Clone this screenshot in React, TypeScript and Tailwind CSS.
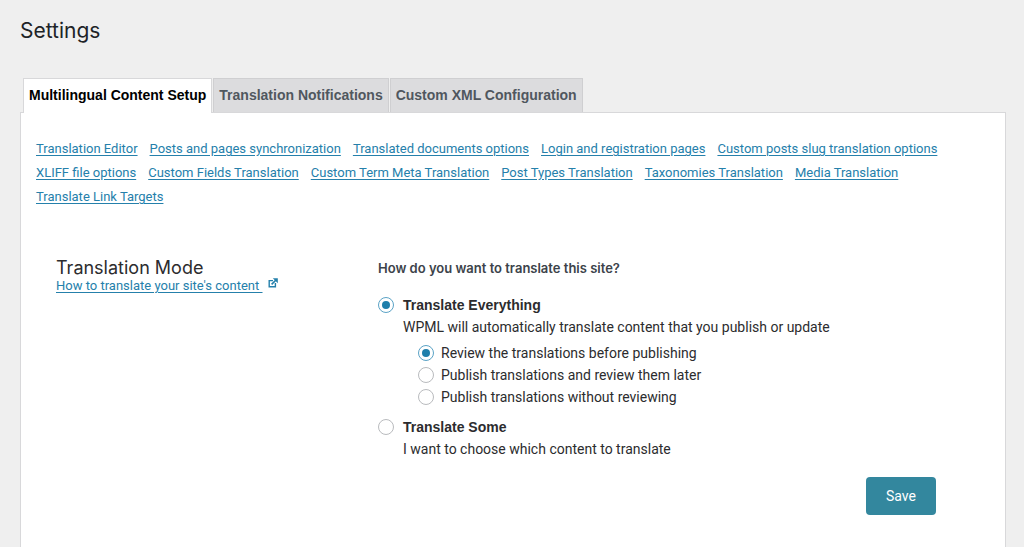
import React, { useState } from 'react';

const tabs = [
  'Multilingual Content Setup',
  'Translation Notifications',
  'Custom XML Configuration',
];

const sections = [
  'Translation Editor',
  'Posts and pages synchronization',
  'Translated documents options',
  'Login and registration pages',
  'Custom posts slug translation options',
  'XLIFF file options',
  'Custom Fields Translation',
  'Custom Term Meta Translation',
  'Post Types Translation',
  'Taxonomies Translation',
  'Media Translation',
  'Translate Link Targets',
];

const reviewOptions = [
  { value: 'before', label: 'Review the translations before publishing' },
  { value: 'later', label: 'Publish translations and review them later' },
  { value: 'none', label: 'Publish translations without reviewing' },
];

interface RadioProps {
  id: string;
  name: string;
  checked: boolean;
  onChange: () => void;
}

function Radio({ id, name, checked, onChange }: RadioProps) {
  return (
    <input
      type="radio"
      id={id}
      name={name}
      checked={checked}
      onChange={onChange}
      className="grid size-4 shrink-0 cursor-pointer appearance-none place-content-center rounded-full border border-[#b9bbbe] bg-white before:size-2 before:rounded-full checked:border-[#5ba3c6] checked:before:bg-[#1f7fab]"
    />
  );
}

function ExternalIcon() {
  return (
    <svg viewBox="0 0 10 10" className="size-[10px]" fill="none" stroke="currentColor" aria-hidden="true">
      <path d="M5 2.6H1.2v6.2h6.2V5" strokeWidth="1.4" />
      <path d="M3.6 6.4 8 2" strokeWidth="1.6" />
      <path d="M4.8 0.2h5v5z" fill="currentColor" stroke="none" />
    </svg>
  );
}

export default function App() {
  const [activeTab, setActiveTab] = useState(tabs[0]);
  const [mode, setMode] = useState('everything');
  const [review, setReview] = useState('before');

  return (
    <div className="flex min-h-screen flex-col bg-[#efefef] pt-[17px] pr-[18px] pl-5 font-['Roboto','Liberation_Sans',sans-serif] text-[#2c2c2e]">
      <h1 className="font-['Inter',sans-serif] text-[21px] leading-7 text-[#1d2327]">Settings</h1>

      {/* Tabs */}
      <div role="tablist" className="mt-[33px] flex gap-px pl-[3px] font-['Liberation_Sans',Arial,sans-serif]">
        {tabs.map((tab) => (
          <button
            key={tab}
            type="button"
            role="tab"
            aria-selected={tab === activeTab}
            onClick={() => setActiveTab(tab)}
            className={
              tab === activeTab
                ? 'relative -mb-px cursor-pointer border border-b-0 border-[#d8d8da] bg-white px-[5px] pb-px text-sm leading-[33px] font-bold whitespace-nowrap text-black'
                : 'cursor-pointer border border-b-0 border-[#cfcfd1] bg-[#dcdcde] px-[5px] text-sm leading-[33px] font-bold whitespace-nowrap text-[#50575e]'
            }
          >
            {tab}
          </button>
        ))}
      </div>

      <main className="flex-1 border border-b-0 border-[#d8d8da] bg-white px-[15px] pt-6">
        <nav className="flex flex-wrap gap-x-3 text-[13px] leading-6 text-[#2580ab]">
          {sections.map((section) => (
            <a key={section} href="#" className="underline underline-offset-2">
              {section}
            </a>
          ))}
        </nav>

        {/* Translation mode */}
        <section className="mt-12 flex pr-[54px] pb-8 pl-5">
          <div className="w-[322px] shrink-0 pt-px">
            <h2 className="font-['Inter',sans-serif] text-lg leading-5">Translation Mode</h2>
            <a href="#" className="flex items-start gap-[5px] text-[13px] leading-4 text-[#2580ab]">
              <span className="whitespace-pre underline underline-offset-2">{"How to translate your site's content "}</span>
              <ExternalIcon />
            </a>
          </div>

          <form className="min-w-0 flex-1 text-sm leading-[22px]" onSubmit={(e) => e.preventDefault()}>
            <h3 className="font-['Inter',sans-serif] text-[13px] font-semibold text-[#3c434a]">How do you want to translate this site?</h3>

            <div className="mt-[15px] flex items-center gap-[9px]">
              <Radio id="mode-everything" name="mode" checked={mode === 'everything'} onChange={() => setMode('everything')} />
              <label htmlFor="mode-everything" className="font-['Liberation_Sans',Arial,sans-serif] font-bold">Translate Everything</label>
            </div>
            <p className="pl-[25px]">WPML will automatically translate content that you publish or update</p>

            <div className="mt-1 pl-10">
              {reviewOptions.map((option) => (
                <div key={option.value} className="flex items-center gap-[7px]">
                  <Radio
                    id={`review-${option.value}`}
                    name="review"
                    checked={review === option.value}
                    onChange={() => setReview(option.value)}
                  />
                  <label htmlFor={`review-${option.value}`}>{option.label}</label>
                </div>
              ))}
            </div>

            <div className="mt-2 flex items-center gap-[9px]">
              <Radio id="mode-some" name="mode" checked={mode === 'some'} onChange={() => setMode('some')} />
              <label htmlFor="mode-some" className="font-['Liberation_Sans',Arial,sans-serif] font-bold">Translate Some</label>
            </div>
            <p className="pl-[25px]">I want to choose which content to translate</p>

            <div className="mt-[17px] flex justify-end">
              <button type="submit" className="cursor-pointer rounded bg-[#33879e] px-5 py-2 text-white">
                Save
              </button>
            </div>
          </form>
        </section>
      </main>
    </div>
  );
}
